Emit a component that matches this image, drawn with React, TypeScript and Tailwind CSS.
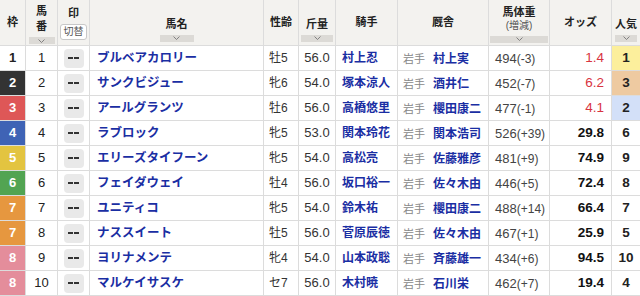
import React from 'react';

type Row = {
  waku: number;
  ban: number;
  name: string;
  sex: string;
  kin: string;
  jockey: string;
  trainer: string;
  weight: string;
  diff: string;
  odds: string;
  pop: number;
};

const rows: Row[] = [
  { waku: 1, ban: 1, name: 'ブルベアカロリー', sex: '牡5', kin: '56.0', jockey: '村上忍', trainer: '村上実', weight: '494', diff: '(-3)', odds: '1.4', pop: 1 },
  { waku: 2, ban: 2, name: 'サンクビジュー', sex: '牝6', kin: '54.0', jockey: '塚本涼人', trainer: '酒井仁', weight: '452', diff: '(-7)', odds: '6.2', pop: 3 },
  { waku: 3, ban: 3, name: 'アールグランツ', sex: '牡6', kin: '56.0', jockey: '高橋悠里', trainer: '櫻田康二', weight: '477', diff: '(-1)', odds: '4.1', pop: 2 },
  { waku: 4, ban: 4, name: 'ラブロック', sex: '牝5', kin: '53.0', jockey: '関本玲花', trainer: '関本浩司', weight: '526', diff: '(+39)', odds: '29.8', pop: 6 },
  { waku: 5, ban: 5, name: 'エリーズタイフーン', sex: '牝5', kin: '54.0', jockey: '高松亮', trainer: '佐藤雅彦', weight: '481', diff: '(+9)', odds: '74.9', pop: 9 },
  { waku: 6, ban: 6, name: 'フェイダウェイ', sex: '牡4', kin: '56.0', jockey: '坂口裕一', trainer: '佐々木由', weight: '446', diff: '(+5)', odds: '72.4', pop: 8 },
  { waku: 7, ban: 7, name: 'ユニティコ', sex: '牝5', kin: '54.0', jockey: '鈴木祐', trainer: '櫻田康二', weight: '488', diff: '(+14)', odds: '66.4', pop: 7 },
  { waku: 7, ban: 8, name: 'ナススイート', sex: '牡5', kin: '56.0', jockey: '菅原辰徳', trainer: '佐々木由', weight: '467', diff: '(+1)', odds: '25.9', pop: 5 },
  { waku: 8, ban: 9, name: 'ヨリナメンテ', sex: '牝4', kin: '54.0', jockey: '山本政聡', trainer: '斉藤雄一', weight: '434', diff: '(+6)', odds: '94.5', pop: 10 },
  { waku: 8, ban: 10, name: 'マルケイサスケ', sex: 'セ7', kin: '56.0', jockey: '木村暁', trainer: '石川栄', weight: '462', diff: '(+7)', odds: '19.4', pop: 4 },
];

const wakuClass: Record<number, string> = {
  1: 'bg-white text-[#222]',
  2: 'bg-[#333333] text-white',
  3: 'bg-[#de5757] text-white',
  4: 'bg-[#3f63b5] text-white',
  5: 'bg-[#e3c440] text-white',
  6: 'bg-[#52a452] text-white',
  7: 'bg-[#e6973f] text-white',
  8: 'bg-[#e48d9b] text-white',
};

const popClass: Record<number, string> = {
  1: 'bg-[#fcef9c]',
  2: 'bg-[#d3e0f8]',
  3: 'bg-[#eecaa1]',
};

const SortBar = ({ w }: { w: string }) => (
  <div className={`mx-auto mt-[3px] h-[7px] ${w} bg-[#dcdad6] flex items-center justify-center`}>
    <svg width="7" height="4" viewBox="0 0 7 4" fill="none">
      <path d="M0.5 0.5 L3.5 3.5 L6.5 0.5" stroke="#777" strokeWidth="0.9" />
    </svg>
  </div>
);

const th = 'border border-[#dcdcdc] bg-[#f3f2ef] text-[11px] font-bold text-[#222] text-center align-middle p-0';
const td = 'border border-[#dcdcdc] h-[25px] p-0 align-middle';

export default function App() {
  return (
    <div
      className="w-[640px] h-[296px] overflow-hidden bg-white"
      style={{ fontFamily: '"Liberation Sans", "Noto Sans CJK JP", sans-serif' }}
    >
      <table className="table-fixed border-collapse w-[641px] -ml-px -mt-px">
        <colgroup>
          <col className="w-[26px]" />
          <col className="w-[32px]" />
          <col className="w-[32px]" />
          <col className="w-[174px]" />
          <col className="w-[35px]" />
          <col className="w-[37px]" />
          <col className="w-[62px]" />
          <col className="w-[91px]" />
          <col className="w-[61px]" />
          <col className="w-[62px]" />
          <col className="w-[29px]" />
        </colgroup>
        <thead>
          <tr className="h-[46px]">
            <th className={th}>枠</th>
            <th className={th}>
              <div className="leading-[15px] pt-[3px]">馬<br />番</div>
              <SortBar w="w-[26px]" />
            </th>
            <th className={th}>
              <div className="leading-[15px]">印</div>
              <div className="mx-auto mt-[3px] w-[27px] h-[16px] border border-[#c8c8c8] rounded-[3px] bg-white text-[10px] font-normal text-[#555] leading-[14px]">切替</div>
            </th>
            <th className={th}>
              <div className="pt-[13px] leading-[15px]">馬名</div>
              <SortBar w="w-[34px]" />
            </th>
            <th className={th}>性齢</th>
            <th className={th}>
              <div className="pt-[13px] leading-[15px]">斤量</div>
              <SortBar w="w-[32px]" />
            </th>
            <th className={th}>騎手</th>
            <th className={th}>厩舎</th>
            <th className={th}>
              <div className="leading-[14px] pt-[2px]">馬体重</div>
              <div className="leading-[14px] font-normal text-[10px] text-[#555]">(増減)</div>
              <SortBar w="w-[58px]" />
            </th>
            <th className={th}>オッズ</th>
            <th className={th}>
              <div className="pt-[13px] leading-[15px]">人気</div>
              <SortBar w="w-[22px]" />
            </th>
          </tr>
        </thead>
        <tbody>
          {rows.map((r) => (
            <tr key={r.ban}>
              <td className={`${td} ${wakuClass[r.waku]} text-center text-[13px] font-bold`}>{r.waku}</td>
              <td className={`${td} text-center text-[13px] text-[#222]`}>{r.ban}</td>
              <td className={td}>
                {/* mark toggle: two short dashes */}
                <div className="mx-auto w-[20px] h-[19px] rounded-[4px] bg-[#e9e9e9] flex items-center justify-center gap-[1px]">
                  <span className="w-[5px] h-[2px] bg-[#333]" />
                  <span className="w-[5px] h-[2px] bg-[#333]" />
                </div>
              </td>
              <td className={`${td} pl-[7px] text-[12.5px] font-bold text-[#1a2ea3] whitespace-nowrap`}>{r.name}</td>
              <td className={`${td} pl-[5px] text-[12px] text-[#333]`}>{r.sex}</td>
              <td className={`${td} text-center text-[13px] text-[#333]`}>{r.kin}</td>
              <td className={`${td} pl-[6px] text-[12px] font-bold text-[#1a2ea3] whitespace-nowrap`}>{r.jockey}</td>
              <td className={`${td} pl-[5px] whitespace-nowrap`}>
                <span className="text-[11px] text-[#888]">岩手</span>
                <span className="ml-[8px] text-[12px] font-bold text-[#1a2ea3]">{r.trainer}</span>
              </td>
              <td className={`${td} pl-[6px] text-[#444] whitespace-nowrap`}>
                <span className="text-[13px]">{r.weight}</span>
                <span className="text-[12px]">{r.diff}</span>
              </td>
              <td
                className={`${td} pr-[7px] text-right text-[13.5px] ${
                  r.pop <= 3 ? 'text-[#d8343f]' : 'text-[#111] font-bold'
                }`}
              >
                {r.odds}
              </td>
              <td className={`${td} text-center text-[13.5px] font-bold text-[#222] ${popClass[r.pop] ?? ''}`}>{r.pop}</td>
            </tr>
          ))}
        </tbody>
      </table>
    </div>
  );
}
